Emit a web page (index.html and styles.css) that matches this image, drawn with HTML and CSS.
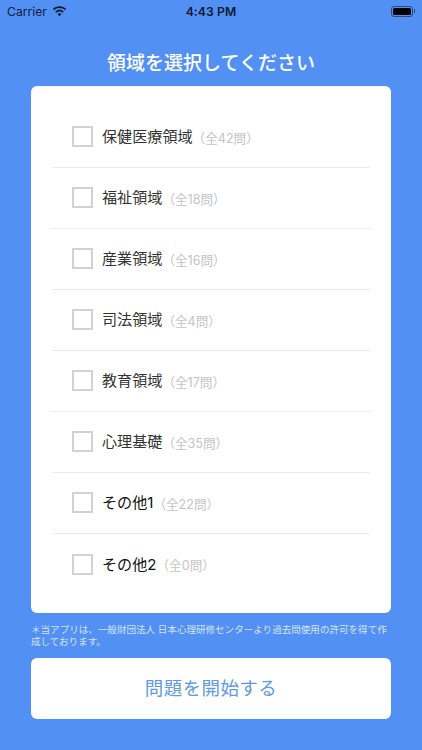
FILE: index.html
```html
<!DOCTYPE html>
<html lang="ja">
<head>
<meta charset="utf-8">
<title>領域を選択してください</title>
<link rel="stylesheet" href="styles.css">
</head>
<body>
<div class="screen">
  <header class="status">
    <div class="status-left">
      <span>Carrier</span>
      <svg class="wifi" viewBox="0 0 16 12" width="15" height="11"><path d="M8 2.3c2.3 0 4.400.9 6 2.400l1.200-1.300C13.300 1.500 10.800.4 8 .4S2.700 1.500.8 3.400L2 4.700c1.600-1.500 3.700-2.400 6-2.400z"/><path d="M8 6c1.300 0 2.500.5 3.400 1.300l1.200-1.300C11.400 4.900 9.800 4.200 8 4.200s-3.400.7-4.600 1.800l1.200 1.300C5.500 6.500 6.700 6 8 6z"/><path d="M8 7.900c-.9 0-1.600.3-2.200.8L8 11.200l2.200-2.500c-.6-.5-1.300-.8-2.200-.8z"/></svg>
    </div>
    <div class="status-time">4:43 PM</div>
    <div class="status-right">
      <div class="battery"><div class="battery-fill"></div></div>
      <div class="battery-cap"></div>
    </div>
  </header>

  <h1 class="title">領域を選択してください</h1>

  <main class="card">
    <ul class="list">
      <li class="row"><span class="box"></span><span class="name dim">保健医療領域</span><span class="count">（全42問）</span></li>
      <li class="row"><span class="box"></span><span class="name dim">福祉領域</span><span class="count">（全18問）</span></li>
      <li class="row"><span class="box"></span><span class="name dim">産業領域</span><span class="count">（全16問）</span></li>
      <li class="row"><span class="box"></span><span class="name dim">司法領域</span><span class="count">（全4問）</span></li>
      <li class="row"><span class="box"></span><span class="name dim">教育領域</span><span class="count">（全17問）</span></li>
      <li class="row"><span class="box"></span><span class="name dim">心理基礎</span><span class="count">（全35問）</span></li>
      <li class="row"><span class="box"></span><span class="name">その他1</span><span class="count">（全22問）</span></li>
      <li class="row"><span class="box"></span><span class="name">その他2</span><span class="count">（全0問）</span></li>
    </ul>
  </main>

  <p class="note">＊当アプリは、一般財団法人 日本心理研修センターより過去問使用の許可を得て作成しております。</p>

  <button class="start">問題を開始する</button>
</div>
</body>
</html>
```
FILE: styles.css
```css
* { box-sizing: border-box; }
html, body { margin: 0; padding: 0; }
body {
  width: 422px;
  height: 750px;
  overflow: hidden;
  background: #5390f3;
  font-family: "Inter", "Liberation Sans", "Noto Sans CJK JP", sans-serif;
}
.screen {
  display: flex;
  flex-direction: column;
  height: 750px;
  padding: 0 31px;
}
.status {
  display: grid;
  grid-template-columns: 1fr auto 1fr;
  align-items: center;
  height: 22px;
  margin: 0 -31px;
  padding: 0 7px 0 7px;
  color: #10203c;
  font-size: 12.200px;
}
.status-left { display: flex; align-items: center; gap: 5px; }
.wifi { fill: #0d1a30; }
.status-time { font-weight: 600; font-size: 12.200px; letter-spacing: 0.1px; color: #0d1a30; }
.status-right { display: flex; justify-content: flex-end; align-items: center; gap: 1px; }
.battery {
  width: 22px;
  height: 11px;
  border: 1px solid #2b4a80;
  border-radius: 3px;
  padding: 1px;
}
.battery-fill { width: 100%; height: 100%; background: #000; border-radius: 1.5px; }
.battery-cap { width: 1px; height: 4px; background: #2b4a80; }
.title {
  margin: 19px 0 0;
  height: 45px;
  text-align: center;
  color: #fff;
  font-size: 19px;
  line-height: 45px;
  font-weight: 500;
}
.card {
  height: 527px;
  background: #fff;
  border-radius: 6px;
  padding: 20.500px 21px 0;
}
.list { list-style: none; margin: 0; padding: 0; }
.row {
  display: flex;
  align-items: center;
  height: 61px;
  padding-left: 19.500px;
  border-bottom: 1px solid #ececec;
}
.row:last-child { border-bottom: 0; }
.box {
  width: 21px;
  height: 21px;
  border: 2px solid #d2d2d2;
  flex: none;
  margin-right: 9.500px;
}
.name { font-size: 15.100px; color: #111; margin-bottom: 3px; }
.name.dim { color: #333; }
.count { font-size: 12.600px; color: #c4c4c4; margin-top: 1px; }
.note {
  margin: 11px 0 0;
  height: 34px;
  color: #d5e3fb;
  font-size: 9.550px;
  line-height: 12px;
}
.start {
  height: 61px;
  border: 0;
  border-radius: 6px;
  background: #fff;
  color: #5f9ae4;
  font-family: inherit;
  font-size: 18.500px;
  letter-spacing: 0.4px;
  padding: 0 0 4px;
}
```
